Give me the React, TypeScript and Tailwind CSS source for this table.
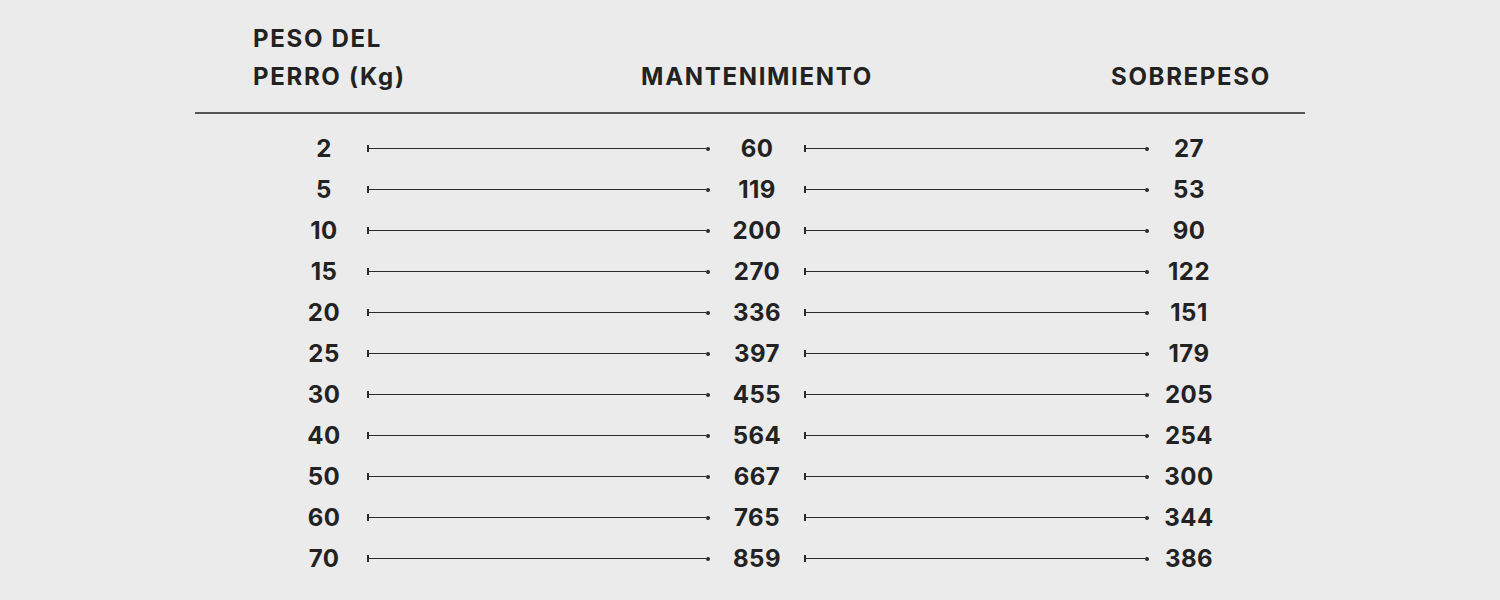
import React from "react";

const rows: [string, string, string][] = [
  ["2", "60", "27"],
  ["5", "119", "53"],
  ["10", "200", "90"],
  ["15", "270", "122"],
  ["20", "336", "151"],
  ["25", "397", "179"],
  ["30", "455", "205"],
  ["40", "564", "254"],
  ["50", "667", "300"],
  ["60", "765", "344"],
  ["70", "859", "386"],
];

function Connector({ w }: { w: string }) {
  return (
    <div className={`flex items-center h-[8px] ${w}`}>
      <div className="w-[2px] h-[7px] bg-[#2a2a2a]" />
      <div className="flex-1 h-[1.5px] bg-[#2a2a2a]" />
      <div className="w-[4px] h-[4px] rounded-full bg-[#2a2a2a]" />
    </div>
  );
}

export default function App() {
  return (
    <div
      className="w-[1500px] h-[600px] bg-[#ebebeb] text-[#222] overflow-hidden"
      style={{ fontFamily: "Inter, 'Liberation Sans', sans-serif" }}
    >
      <div className="flex items-end pt-[20px] pl-[253px] font-[750] text-[24px] leading-[38px] tracking-[0.07em]">
        <div className="w-[364px]">
          <div>PESO DEL</div>
          <div>PERRO (Kg)</div>
        </div>
        <div className="w-[280px] text-center">MANTENIMIENTO</div>
        <div className="w-[194px]" />
        <div className="w-[200px] text-center">SOBREPESO</div>
      </div>
      <div className="ml-[195px] w-[1110px] h-[2px] bg-[#555] mt-[16px]" />
      <div className="pt-[14px] pl-[284px] font-[750] text-[24px] tracking-[0.02em]">
        {rows.map(([a, b, c]) => (
          <div key={a} className="flex items-center h-[41px]">
            <div className="w-[80px] text-center">{a}</div>
            <div className="w-[3px]" />
            <Connector w="w-[343px]" />
            <div className="w-[94px] text-center">{b}</div>
            <Connector w="w-[345px]" />
            <div className="w-[80px] text-center">{c}</div>
          </div>
        ))}
      </div>
    </div>
  );
}
